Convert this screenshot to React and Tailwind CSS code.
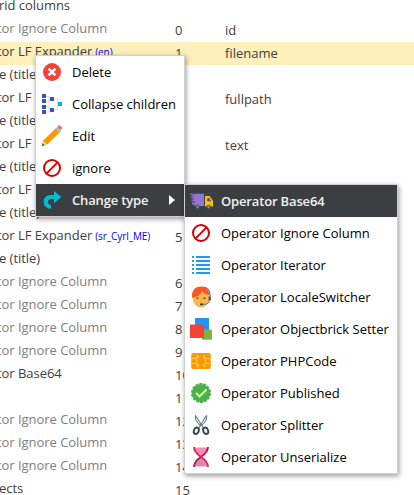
import React from "react";

const rows = [
  { label: "rid columns" },
  { label: "tor Ignore Column", ignored: true, index: "0", value: "id" },
  { label: "tor LF Expander", lang: "(en)", index: "1", value: "filename", selected: true },
  { label: "e (title)" },
  { label: "tor LF", index: "2", value: "fullpath" },
  { label: "e (title)" },
  { label: "tor LF", index: "3", value: "text" },
  { label: "e (title)" },
  { label: "tor LF", index: "4" },
  { label: "e (title)" },
  { label: "tor LF Expander", lang: "(sr_Cyrl_ME)", index: "5" },
  { label: "e (title)" },
  { label: "tor Ignore Column", ignored: true, index: "6" },
  { label: "tor Ignore Column", ignored: true, index: "7" },
  { label: "tor Ignore Column", ignored: true, index: "8" },
  { label: "tor Ignore Column", ignored: true, index: "9" },
  { label: "tor Base64", index: "10" },
  { label: "", index: "11" },
  { label: "tor Ignore Column", ignored: true, index: "12" },
  { label: "tor Ignore Column", ignored: true, index: "13" },
  { label: "tor Ignore Column", ignored: true, index: "14" },
  { label: "ects", index: "15" },
];

function Icon({ children }) {
  return (
    <svg viewBox="0 0 24 24" className="h-6 w-6 shrink-0" fill="none">
      {children}
    </svg>
  );
}

const DeleteIcon = () => (
  <Icon>
    <circle cx="12" cy="12" r="9" fill="#f44336" />
    <path d="M8.6 8.6l6.8 6.8M15.4 8.6l-6.8 6.8" stroke="#fff" strokeWidth="2.6" />
  </Icon>
);

const TreeIcon = () => (
  <Icon>
    <path d="M4 4.500h5l0 2.500M4 10h5V7h3.500M4 14.500h5v3M4 20h5v-2.500h3.500M12 7h5.500v10.500H12M17.500 12H19" stroke="#cfd8dc" strokeWidth="1" />
    <path d="M2 2h4v4H2zM2 7h4v4H2zM2 13h4v4H2zM2 18h4v4H2zM10 5h4v4h-4zM10 16h4v4h-4z" fill="#3f51b5" />
    <path d="M18 10h4v4h-4z" fill="#00bcd4" />
  </Icon>
);

const PencilIcon = () => (
  <Icon>
    <path d="M16 4L20 8 7 20.800 2.800 17z" fill="#ff9800" />
    <path d="M15.500 4.500l2-2 4 4-2 2z" fill="#b0bec5" />
    <path d="M17.400 2.800l1.200-1.200q1-.6 1.900.3l1.200 1.200q.8 1 0 1.900l-1 1z" fill="#e57373" />
    <path d="M2.800 17L7 20.800 2 22z" fill="#ffcc80" />
    <path d="M2.400 19.200l2.400 2.100L2 22z" fill="#37474f" />
  </Icon>
);

const IgnoreIcon = () => (
  <Icon>
    <circle cx="12" cy="12" r="8" stroke="#d50000" strokeWidth="2" />
    <path d="M6.400 17.600L17.600 6.400" stroke="#d50000" strokeWidth="2" />
  </Icon>
);

const RedoIcon = () => (
  <Icon>
    <path d="M21.300 9L14 3v4H11C6.500 7 3.700 9.800 3.700 13.700c0 4 2.800 6.800 7.300 7v-3.600c-1.800-.2-3-1.400-3-3.100 0-1.800 1.300-3 3.300-3H14v4z" fill="#00bcd4" />
  </Icon>
);

const TruckIcon = () => (
  <Icon>
    <path d="M1 4.700h14V17H5.500v-1.600H3v-1.600h2v-1.600H2.500v-1.600H4V9H2V7.400h1.500V6H1z" fill="#9575cd" />
    <path d="M1 5.300h5M2 8h4M2.500 10.700h4M3 13.500h4" stroke="#7e57c2" strokeWidth=".8" />
    <path d="M16 7h4.500l3.500 4.700V17.500h-8z" fill="#ffc107" />
    <path d="M18.300 9h2l2 3.200h-4z" fill="#455a64" />
    <circle cx="8.500" cy="18" r="2.200" fill="#455a64" />
    <circle cx="19.500" cy="18" r="2.200" fill="#455a64" />
    <circle cx="8.500" cy="18" r=".9" fill="#90a4ae" />
    <circle cx="19.500" cy="18" r=".9" fill="#90a4ae" />
  </Icon>
);

const ListIcon = () => (
  <Icon>
    <path d="M3 4h2M3 8h2M3 12h2M3 16h2M3 20h2M7 4h14M7 8h14M7 12h14M7 16h14M7 20h14" stroke="#2196f3" strokeWidth="2" />
  </Icon>
);

const SupportIcon = () => (
  <Icon>
    <path d="M14 2q7 .5 7 8.500v4" stroke="#607d8b" strokeWidth="1.200" />
    <ellipse cx="12" cy="13.500" rx="8.300" ry="9" fill="#ffb74d" />
    <path d="M3.200 13C2 6 6 1.500 12 1.500c5 0 8 3 8.400 8.500-4-.5-5.700-1.500-7.400-4-2 4-5 6-9.800 7z" fill="#ff5722" />
    <circle cx="8.500" cy="13.300" r="1" fill="#784719" />
    <circle cx="15.500" cy="13.300" r="1" fill="#784719" />
    <path d="M19.500 11.500h2.300v4h-2.300z" fill="#455a64" />
    <path d="M12 19.300h4.500q3.500-.5 4.300-4" stroke="#607d8b" strokeWidth="1" />
    <path d="M11 18.500h3v1.800h-3z" fill="#37474f" />
  </Icon>
);

const BricksIcon = () => (
  <Icon>
    <path d="M6 1h14v14H6z" fill="#2196f3" />
    <path d="M13 12.700h10v10H13z" fill="#7cb342" />
    <path d="M1 7.500h14v13.500H1z" fill="#f44336" />
  </Icon>
);

const ChipIcon = () => (
  <Icon>
    <rect x="2.200" y="4" width="19.600" height="16" rx="2" fill="#ff9800" />
    <path d="M2.500 9.500H7l2-2.500M2.500 14.500H7l2 2.500M21.500 9.500H17l-2-2.500M21.500 14.500H17l-2 2.500M7 9.500q2 2.500 0 5M17 9.500q-2 2.500 0 5M7.500 6.500l2 .5v2.500M16.500 6.500l-2 .5v2.500M7.500 17.500l2-.5v-2.500M16.500 17.500l-2-.5v-2.500" stroke="#ffd54f" strokeWidth="1" />
  </Icon>
);

const PublishedIcon = () => (
  <Icon>
    <circle cx="12" cy="12" r="9" fill="#4caf50" />
    <circle cx="12" cy="12" r="9.100" stroke="#4caf50" strokeWidth="1.800" strokeDasharray="3 1.085" />
    <path d="M7 12l3.500 3.500 7-7" stroke="#ccff90" strokeWidth="2" />
  </Icon>
);

const ScissorsIcon = () => (
  <Icon>
    <path d="M6.500 2.500L15 16M6.500 2.500q-1.300 5 5.500 10.500M17.500 2.500L9 16M17.500 2.500q1.300 5-5.500 10.500" stroke="#607d8b" strokeWidth="1.100" />
    <ellipse cx="7.300" cy="17.800" rx="2.400" ry="3.300" transform="rotate(20 7.300 17.800)" stroke="#37474f" strokeWidth="1.900" />
    <ellipse cx="16.700" cy="17.800" rx="2.400" ry="3.300" transform="rotate(-20 16.700 17.800)" stroke="#37474f" strokeWidth="1.900" />
  </Icon>
);

const HourglassIcon = () => (
  <Icon>
    <path d="M5 2.500h14Q18 8 12 12 6 8 5 2.500z" fill="#f48fb1" />
    <path d="M5 21.500h14Q18 16 12 12 6 16 5 21.500z" fill="#d68aad" />
    <path d="M19 2q0 5-7 10-7 4.500-7 10" stroke="#ad1457" strokeWidth="1.800" />
    <path d="M5 2q0 5 7 10 7 4.500 7 10" stroke="#e91e63" strokeWidth="1.800" />
  </Icon>
);

const contextItems = [
  { label: "Delete", icon: DeleteIcon },
  { label: "Collapse children", icon: TreeIcon },
  { label: "Edit", icon: PencilIcon },
  { label: "ignore", icon: IgnoreIcon },
  { label: "Change type", icon: RedoIcon, active: true, submenu: true },
];

const typeItems = [
  { label: "Operator Base64", icon: TruckIcon, active: true },
  { label: "Operator Ignore Column", icon: IgnoreIcon },
  { label: "Operator Iterator", icon: ListIcon },
  { label: "Operator LocaleSwitcher", icon: SupportIcon },
  { label: "Operator Objectbrick Setter", icon: BricksIcon },
  { label: "Operator PHPCode", icon: ChipIcon },
  { label: "Operator Published", icon: PublishedIcon },
  { label: "Operator Splitter", icon: ScissorsIcon },
  { label: "Operator Unserialize", icon: HourglassIcon },
];

function Menu({ items, className }) {
  return (
    <div className={"absolute border border-[#d0d0d0] bg-white shadow-[1px_2px_5px_rgba(0,0,0,0.4)] " + className}>
      {items.map(({ label, icon: ItemIcon, active, submenu }) => (
        <div
          key={label}
          className={
            "flex h-8 items-center gap-2 pl-1 " +
            (active ? "bg-[#3c3f41] font-semibold tracking-[-0.16px] text-[#f2f2f2]" : "text-black")
          }
        >
          <ItemIcon />
          <span className="grow whitespace-nowrap">{label}</span>
          {submenu && (
            <svg viewBox="0 0 6 10" className="mr-[9px] h-[10px] w-[6px]">
              <path d="M0 0l6 5-6 5z" fill="#fff" />
            </svg>
          )}
        </div>
      ))}
    </div>
  );
}

export default function App() {
  return (
    <div className="relative h-[495px] w-[414px] overflow-hidden bg-white font-['Open_Sans',sans-serif] text-[13px] leading-[23px] text-[#404040]">
      <div className="-mt-1">
        {rows.map((row, i) => (
          <div key={i} className={"flex h-[23px] whitespace-nowrap " + (row.selected ? "bg-[#ffefbb]" : "")}>
            <div className={"-mt-0.5 w-[175px] shrink-0 tracking-[-0.04px] " + (row.ignored ? "text-[#808080]" : "")}>
              <span className={row.label.startsWith("tor") ? "-ml-[3px]" : "-ml-px"}>{row.label}</span>
              {row.lang && (
                <span className="ml-[3px] text-[10px] tracking-[-0.08px] text-[#0000ff]">{row.lang}</span>
              )}
            </div>
            <div className="w-[50px] shrink-0">{row.index}</div>
            <div>{row.value}</div>
          </div>
        ))}
      </div>
      <Menu items={contextItems} className="left-[35px] top-[55px] w-[150px]" />
      <Menu items={typeItems} className="left-[184px] top-[184px] w-[214px]" />
    </div>
  );
}
